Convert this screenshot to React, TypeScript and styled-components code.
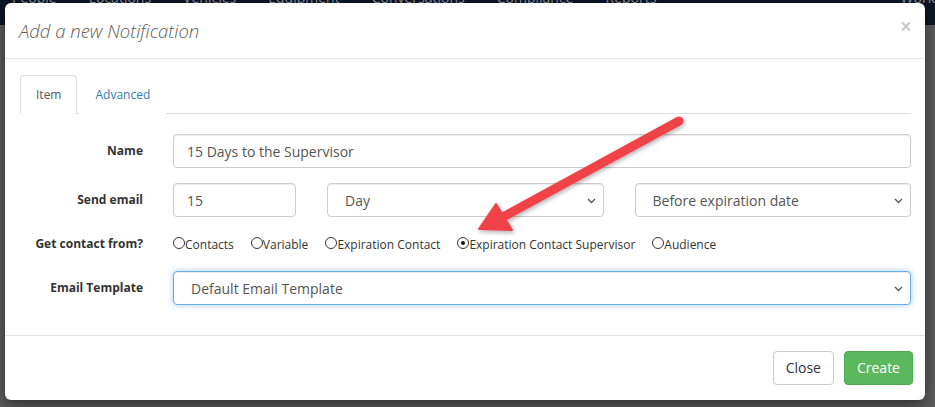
import styled, { createGlobalStyle } from "styled-components";

const GlobalStyle = createGlobalStyle`
  * { box-sizing: border-box; }
  body {
    margin: 0;
    background: #5d5d5d;
    font-family: "Open Sans", "DejaVu Sans", sans-serif;
  }
`;

const navItems = ["People", "Locations", "Vehicles", "Equipment", "Conversations", "Compliance", "Reports"];

const contactOptions = [
  { label: "Contacts", checked: false },
  { label: "Variable", checked: false },
  { label: "Expiration Contact", checked: false },
  { label: "Expiration Contact Supervisor", checked: true },
  { label: "Audience", checked: false },
];

function Chevron() {
  return (
    <ChevronIcon width="9" height="6" viewBox="0 0 9 6">
      <path d="M1 1l3.5 3.5L8 1" fill="none" stroke="#555" strokeWidth="1.3" />
    </ChevronIcon>
  );
}

function App() {
  return (
    <>
      <GlobalStyle />
      <Page>
        <Navbar>
          {navItems.map((item) => (
            <NavLink key={item}>{item}</NavLink>
          ))}
          <NavLink $right>Work</NavLink>
        </Navbar>

        <Modal>
          <Header>
            <Title>Add a new Notification</Title>
            <CloseX>×</CloseX>
          </Header>

          <Body>
            <Tabs>
              <Tab $active>Item</Tab>
              <Tab>Advanced</Tab>
            </Tabs>

            <Form>
              <Row>
                <Label>Name</Label>
                <Input defaultValue="15 Days to the Supervisor" />
              </Row>

              <Row>
                <Label>Send email</Label>
                <Triple>
                  <Input defaultValue="15" />
                  <SelectWrap>
                    <Select defaultValue="Day">
                      <option>Day</option>
                    </Select>
                    <Chevron />
                  </SelectWrap>
                  <SelectWrap>
                    <Select defaultValue="Before expiration date">
                      <option>Before expiration date</option>
                    </Select>
                    <Chevron />
                  </SelectWrap>
                </Triple>
              </Row>

              <Row>
                <Label $pad={2}>Get contact from?</Label>
                <Radios>
                  {contactOptions.map((o) => (
                    <RadioItem key={o.label}>
                      <Circle $checked={o.checked} />
                      {o.label}
                    </RadioItem>
                  ))}
                </Radios>
              </Row>

              <Row>
                <Label>Email Template</Label>
                <SelectWrap>
                  <Select $focus $padLeft={17} defaultValue="Default Email Template">
                    <option>Default Email Template</option>
                  </Select>
                  <Chevron />
                </SelectWrap>
              </Row>
            </Form>
          </Body>

          <Footer>
            <Button>Close</Button>
            <Button $primary>Create</Button>
          </Footer>
        </Modal>

        <Arrow width="935" height="407" viewBox="0 0 935 407">
          <defs>
            <filter id="sh" x="-20%" y="-20%" width="140%" height="140%">
              <feDropShadow dx="1" dy="2" stdDeviation="2" floodColor="#000" floodOpacity="0.3" />
            </filter>
          </defs>
          <g filter="url(#sh)" fill="#f0424a" stroke="#f0424a">
            <line x1="679" y1="121" x2="503" y2="217" strokeWidth="9" strokeLinecap="round" />
            <polygon points="479,229 496,204 512,230" strokeWidth="2" strokeLinejoin="round" />
          </g>
        </Arrow>
      </Page>
    </>
  );
}

export default App;


/*Styled Components*/

const Page = styled.div`
  position: relative;
  width: 935px;
  height: 407px;
  overflow: hidden;
  background: #5d5d5d;
`;

const Navbar = styled.div`
  display: flex;
  align-items: flex-start;
  gap: 32px;
  height: 25px;
  padding: 0 0 0 12px;
  background: #0d1626;
`;

const NavLink = styled.span<{ $right?: boolean }>`
  margin-top: -9px;
  margin-left: ${(p) => (p.$right ? "auto" : "0")};
  font-size: 14px;
  line-height: 14px;
  color: #8d939d;
`;

const Modal = styled.div`
  position: absolute;
  top: 3px;
  left: 5px;
  width: 920px;
  background: #fff;
  border-radius: 6px;
  box-shadow: 0 5px 15px rgba(0, 0, 0, 0.5);
`;

const Header = styled.div`
  display: flex;
  justify-content: space-between;
  align-items: center;
  padding: 15px 13px 15px 14px;
  border-bottom: 1px solid #e5e5e5;
`;

const Title = styled.h4`
  margin: 0;
  font-size: 18.5px;
  line-height: 25px;
  font-weight: 300;
  font-style: italic;
  color: #5e5e5e;
`;

const CloseX = styled.span`
  font-size: 21px;
  font-weight: bold;
  line-height: 1;
  color: #000;
  opacity: 0.2;
  margin-top: -8px;
`;

const Body = styled.div`
  padding: 16px 14px 15px 15px;
`;

const Tabs = styled.div`
  display: flex;
  border-bottom: 1px solid #ddd;
`;

const Tab = styled.div<{ $active?: boolean }>`
  margin: 0 2px -1px 0;
  padding: 10px 15px;
  font-size: 12px;
  line-height: 17px;
  color: ${(p) => (p.$active ? "#555" : "#337ab7")};
  background: #fff;
  border: 1px solid ${(p) => (p.$active ? "#ddd" : "transparent")};
  border-bottom-color: ${(p) => (p.$active ? "#fff" : "transparent")};
  border-radius: 4px 4px 0 0;
`;

const Form = styled.div`
  padding-top: 20px;
`;

const Row = styled.div`
  display: grid;
  grid-template-columns: 123px 1fr;
  column-gap: 30px;
  align-items: start;
  margin-bottom: 15px;
`;

const Label = styled.label<{ $pad?: number }>`
  padding-top: ${(p) => p.$pad ?? 7}px;
  text-align: right;
  font-size: 12px;
  line-height: 20px;
  font-weight: bold;
  color: #333;
`;

const Triple = styled.div`
  display: grid;
  grid-template-columns: 123px 1fr 1fr;
  column-gap: 31px;
`;

const Input = styled.input`
  width: 100%;
  height: 34px;
  padding: 6px 13px;
  font-family: inherit;
  font-size: 14px;
  color: #555;
  background: #fff;
  border: 1px solid #ccc;
  border-radius: 4px;
  box-shadow: inset 0 1px 1px rgba(0, 0, 0, 0.075);
  outline: none;
`;

const SelectWrap = styled.div`
  position: relative;
`;

const Select = styled.select<{ $focus?: boolean; $padLeft?: number }>`
  appearance: none;
  width: 100%;
  height: 34px;
  padding: 6px 24px 6px ${(p) => p.$padLeft ?? 17}px;
  font-family: inherit;
  font-size: 14px;
  color: #555;
  background: #fff;
  border: 1px solid ${(p) => (p.$focus ? "#66afe9" : "#ccc")};
  border-radius: 4px;
  box-shadow: ${(p) =>
    p.$focus
      ? "inset 0 1px 1px rgba(0,0,0,.075), 0 0 6px rgba(102,175,233,.6)"
      : "inset 0 1px 1px rgba(0,0,0,.075)"};
  outline: none;
`;

const ChevronIcon = styled.svg`
  position: absolute;
  right: 8px;
  top: 15px;
  pointer-events: none;
`;

const Radios = styled.div`
  display: flex;
  align-items: center;
  gap: 17px;
  padding-top: 1px;
  height: 24px;
`;

const RadioItem = styled.span`
  display: inline-flex;
  align-items: center;
  font-size: 12px;
  line-height: 20px;
  color: #333;
`;

const Circle = styled.span<{ $checked: boolean }>`
  position: relative;
  width: 12px;
  height: 12px;
  margin-top: -3px;
  border: 1px solid #333;
  border-radius: 50%;
  background: #fff;

  &::after {
    content: "";
    display: ${(p) => (p.$checked ? "block" : "none")};
    position: absolute;
    left: 3px;
    top: 3px;
    width: 4px;
    height: 4px;
    border-radius: 50%;
    background: #111;
  }
`;

const Footer = styled.div`
  display: flex;
  justify-content: flex-end;
  gap: 10px;
  padding: 15px 12px 15px 15px;
  border-top: 1px solid #e5e5e5;
`;

const Button = styled.button<{ $primary?: boolean }>`
  height: 34px;
  padding: 6px 12px;
  font-family: inherit;
  font-size: 14px;
  line-height: 20px;
  color: ${(p) => (p.$primary ? "#fff" : "#333")};
  background: ${(p) => (p.$primary ? "#5cb85c" : "#fff")};
  border: 1px solid ${(p) => (p.$primary ? "#4cae4c" : "#ccc")};
  border-radius: 4px;
  cursor: pointer;
`;

const Arrow = styled.svg`
  position: absolute;
  top: 0;
  left: 0;
  pointer-events: none;
`;
